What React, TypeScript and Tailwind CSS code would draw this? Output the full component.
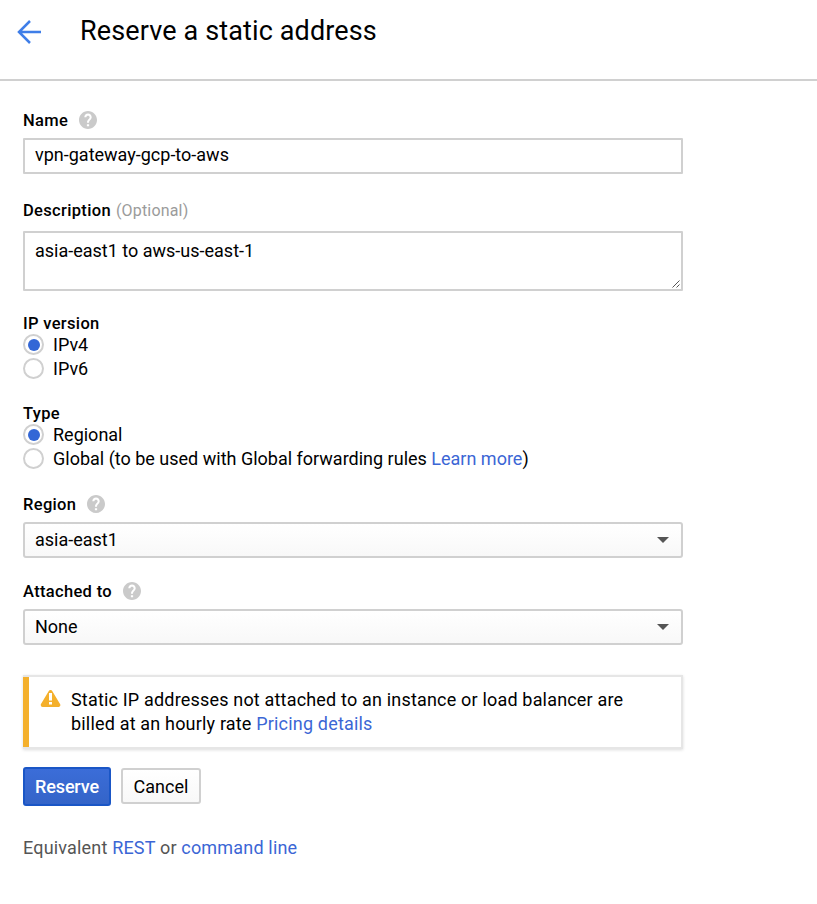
import type { ReactNode } from "react";

function HelpIcon({ className = "ml-[10.5px]" }: { className?: string }) {
  return (
    <svg className={`size-[18px] shrink-0 ${className}`} viewBox="2 2 20 20" fill="#cacaca" aria-hidden="true">
      <path d="M12 2C6.48 2 2 6.48 2 12s4.480 10 10 10 10-4.480 10-10S17.520 2 12 2zm1.250 17h-2.500v-2.400h2.500v2.400zm2-7.750-.9.920C13.500 12.900 13.150 13.500 13.150 15h-2.300v-.5c0-1.100.45-2.100 1.170-2.830l1.240-1.260c.37-.36.590-.86.590-1.410 0-1.100-.75-1.850-1.850-1.850s-1.850.75-1.850 1.850H7.900c0-2.210 1.790-4.100 4.100-4.100s4.100 1.890 4.100 4.100c0 .88-.36 1.680-.85 2.250z" />
    </svg>
  );
}

function Label({ text, note, help, className = "" }: { text: string; note?: string; help?: boolean; className?: string }) {
  return (
    <div className={`flex h-5 items-center text-[16px] leading-5 ${className}`}>
      <span className="pt-[2px] text-[16.5px] font-medium tracking-[0.33px]">{text}</span>
      {note && <span className="ml-[5px] pt-[2px] tracking-[0.18px] text-[#9b9b9b]">{note}</span>}
      {help && <HelpIcon />}
    </div>
  );
}

function Radio({ checked, children }: { checked?: boolean; children: ReactNode }) {
  return (
    <div className="flex h-6 items-center">
      <span className="mb-[2px] flex size-[21px] shrink-0 items-center justify-center rounded-full border-2 border-[#d0d0d0] bg-white">
        {checked && <span className="mt-[1px] size-3 rounded-full bg-[#3367d6]" />}
      </span>
      <span className="ml-[9px] whitespace-nowrap">{children}</span>
    </div>
  );
}

function Select({ value }: { value: string }) {
  return (
    <div className="flex h-9 items-center justify-between rounded-[3px] border-2 border-[#d0d0d0] bg-linear-to-b from-white to-[#f8f8f8] pr-3 pl-[10px]">
      <span>{value}</span>
      <svg className="h-[6px] w-3" viewBox="0 0 12 6" fill="#555" aria-hidden="true">
        <path d="M0 0h12L6 6z" />
      </svg>
    </div>
  );
}

function Link({ children }: { children: ReactNode }) {
  return <a className="text-[#3b66d5]">{children}</a>;
}

export default function App() {
  return (
    <div className="h-[904px] w-full overflow-hidden bg-white font-['Roboto',sans-serif] text-[18px] leading-6 text-black">
      <header className="flex h-[81px] border-b-2 border-[#d0d0d0]">
        <svg className="mt-5 ml-[17px] h-6 w-[25px]" viewBox="0 0 25 24" fill="none" stroke="#3f7ee8" strokeWidth="2.500" aria-hidden="true">
          <path d="M24 12H2M13 1 2 12l11 11" />
        </svg>
        <h1 className="mt-[15px] ml-[38px] text-[27px] leading-8 tracking-[0.13px] whitespace-nowrap">Reserve a static address</h1>
      </header>

      <main className="ml-[23px] w-[660px]">
        <Label text="Name" help className="mt-[29px]" />
        <div className="mt-2 flex h-9 items-center rounded-[1px] border-2 border-[#d0d0d0] px-[10px]">
          <span className="-mt-[2px]">vpn-gateway-gcp-to-aws</span>
        </div>

        <Label text="Description" note="(Optional)" className="mt-[26px]" />
        <div className="mt-[11px] flex h-[60px] items-end justify-between rounded-[1px] border-2 border-[#d0d0d0] pl-[10px]">
          <span className="self-start pt-[6px]">asia-east1 to aws-us-east-1</span>
          <svg className="mr-[1px] mb-[1px] size-2" viewBox="0 0 8 8" stroke="#555" aria-hidden="true">
            <path d="M.5 7.500l7-7M4.500 7.500l3-3" />
          </svg>
        </div>

        <Label text="IP version" className="mt-[22px]" />
        <Radio checked>IPv4</Radio>
        <Radio>IPv6</Radio>

        <Label text="Type" className="mt-[22px]" />
        <Radio checked>Regional</Radio>
        <Radio>
          Global (to be used with Global forwarding rules <Link>Learn more</Link>)
        </Radio>

        <Label text="Region" help className="mt-[23px]" />
        <div className="mt-2">
          <Select value="asia-east1" />
        </div>

        <Label text="Attached to" help className="mt-[23px]" />
        <div className="mt-2">
          <Select value="None" />
        </div>

        <div className="mt-[30px] border-y-2 border-r-2 border-[#e6e6e6] shadow-[0_1px_3px_#dcdcdc]">
          <div className="flex h-[70px] border-l-[6px] border-[#f4b02c] pt-[11px] pl-3">
            <svg className="mt-[1px] -ml-[1px] h-[19px] w-[21px] shrink-0" viewBox="0 0 21 19" aria-hidden="true">
              <path d="M10.500 3 18.300 16H2.700z" fill="#f4b02c" stroke="#f4b02c" strokeWidth="4" strokeLinejoin="round" />
              <path d="M9 4h3v7.500H9zM9 13h3v2.500H9z" fill="#fff" />
            </svg>
            <p className="ml-[10px] tracking-[0.18px] whitespace-nowrap">
              Static IP addresses not attached to an instance or load balancer are
              <br />
              billed at an hourly rate <Link>Pricing details</Link>
            </p>
          </div>
        </div>

        <div className="mt-[18px] flex h-[39px] items-start gap-[10px]">
          <button className="h-[39px] w-[88px] rounded-[3px] border-2 border-[#1a56c6] bg-linear-to-b from-[#3b6dd8] to-[#3464c8] font-medium tracking-[-0.15px] text-white">
            Reserve
          </button>
          <button className="mt-[1px] h-9 w-20 rounded-[3px] border-2 border-[#d0d0d0] bg-linear-to-b from-white to-[#f8f8f8] pt-[2px]">
            Cancel
          </button>
        </div>

        <p className="mt-[30px] tracking-[0.18px] text-[#555]">
          Equivalent <Link>REST</Link> or <Link>command line</Link>
        </p>
      </main>
    </div>
  );
}
